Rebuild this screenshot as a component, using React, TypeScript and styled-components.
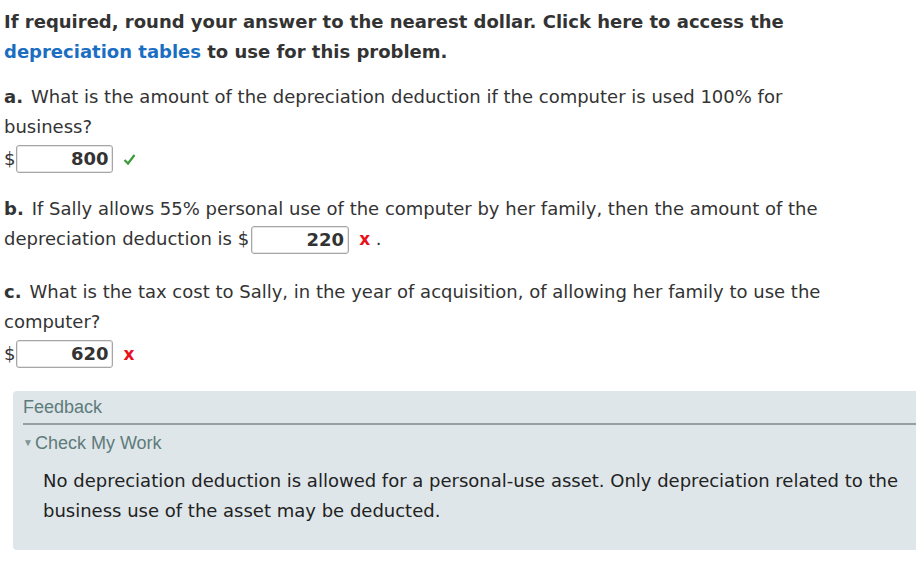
import React from "react";
import styled, { createGlobalStyle } from "styled-components";

const Global = createGlobalStyle`
  html, body { margin: 0; padding: 0; background: #fff; }
  body { font-family: "DejaVu Sans", Verdana, sans-serif; color: #333; }
`;

const Page = styled.div`
  padding: 7px 0 0 4px;
  width: 912px;
  overflow: hidden;
`;

const Content = styled.div`
  width: 856px;
`;

const Instr = styled.p`
  margin: 0;
  font-size: 18px;
  line-height: 30px;
  font-weight: bold;
  color: #333;
`;

const Link = styled.a`
  color: #1b6fc2;
  text-decoration: none;
`;

const Question = styled.div<{ $after?: number }>`
  margin-top: 15px;
  padding-bottom: ${(p) => p.$after ?? 0}px;
  font-size: 18px;
  line-height: 30px;
  color: #333;
`;

const Label = styled.b`
  margin-right: 8px;
`;

const AnswerRow = styled.div`
  display: flex;
  align-items: center;
  height: 28px;
  margin-top: 3px;
`;

const Dollar = styled.span`
  font-size: 18px;
`;

const Box = styled.span<{ $inline?: boolean }>`
  display: inline-flex;
  justify-content: flex-end;
  align-items: center;
  box-sizing: border-box;
  width: ${(p) => (p.$inline ? 98 : 97)}px;
  height: 28px;
  margin-left: ${(p) => (p.$inline ? 2 : 1)}px;
  padding-right: 4px;
  border: 1px solid #a6a6a6;
  border-radius: 3px;
  box-shadow: inset 0 0 0 1px #e6e6e6;
  font-weight: bold;
  font-size: 18px;
  line-height: 26px;
  color: #333;
  vertical-align: middle;
`;

const Mark = styled.span`
  margin-left: 10px;
  color: #e8101a;
  font-size: 17px;
  font-weight: bold;
  font-family: "DejaVu Sans", Verdana, sans-serif;
`;

const CheckIcon = styled.svg`
  margin-left: 10px;
  width: 13px;
  height: 13px;
`;

const Feedback = styled.div`
  margin: 23px 0 0 9px;
  background: #dfe6e9;
  border-radius: 4px 0 0 4px;
  padding: 4px 0 24px 10px;
`;

const FbTitle = styled.div`
  font-family: "Liberation Sans", Arial, sans-serif;
  font-size: 18px;
  line-height: 24px;
  color: #5d7b7b;
  padding-bottom: 4px;
  border-bottom: 2px solid #979fa3;
`;

const Check = styled.div`
  font-family: "Liberation Sans", Arial, sans-serif;
  font-size: 18px;
  line-height: 24px;
  color: #5d7b7b;
  margin-top: 6px;
  display: flex;
  align-items: center;
`;

const Tri = styled.span`
  font-size: 10px;
  margin-right: 2px;
  color: #7d9595;
`;

const FbText = styled.p`
  margin: 11px 0 0 20px;
  font-size: 18px;
  line-height: 30px;
  color: #222;
`;

export default function App() {
  return (
    <>
      <Global />
      <Page>
        <Content>
          <Instr>
            If required, round your answer to the nearest dollar. Click here to access the{" "}
            <Link>depreciation tables</Link> to use for this problem.
          </Instr>

          <Question $after={6}>
            <Label>a.</Label>What is the amount of the depreciation deduction if the computer is used 100% for
            business?
            <AnswerRow>
              <Dollar>$</Dollar>
              <Box>800</Box>
              <CheckIcon viewBox="0 0 13 13">
                <path d="M1.5 7 L5 10.5 L11.5 2" fill="none" stroke="#3a9b3a" strokeWidth="2.2" />
              </CheckIcon>
            </AnswerRow>
          </Question>

          <Question $after={8}>
            <Label>b.</Label>If Sally allows 55% personal use of the computer by her family, then the amount of the
            depreciation deduction is $<Box $inline>220</Box>
            <Mark>x</Mark> .
          </Question>

          <Question>
            <Label>c.</Label>What is the tax cost to Sally, in the year of acquisition, of allowing her family to use
            the computer?
            <AnswerRow>
              <Dollar>$</Dollar>
              <Box>620</Box>
              <Mark>x</Mark>
            </AnswerRow>
          </Question>
        </Content>

        <Feedback>
          <FbTitle>Feedback</FbTitle>
          <Check>
            <Tri>▼</Tri>Check My Work
          </Check>
          <FbText>
            No depreciation deduction is allowed for a personal-use asset. Only depreciation related to the business
            use of the asset may be deducted.
          </FbText>
        </Feedback>
      </Page>
    </>
  );
}
